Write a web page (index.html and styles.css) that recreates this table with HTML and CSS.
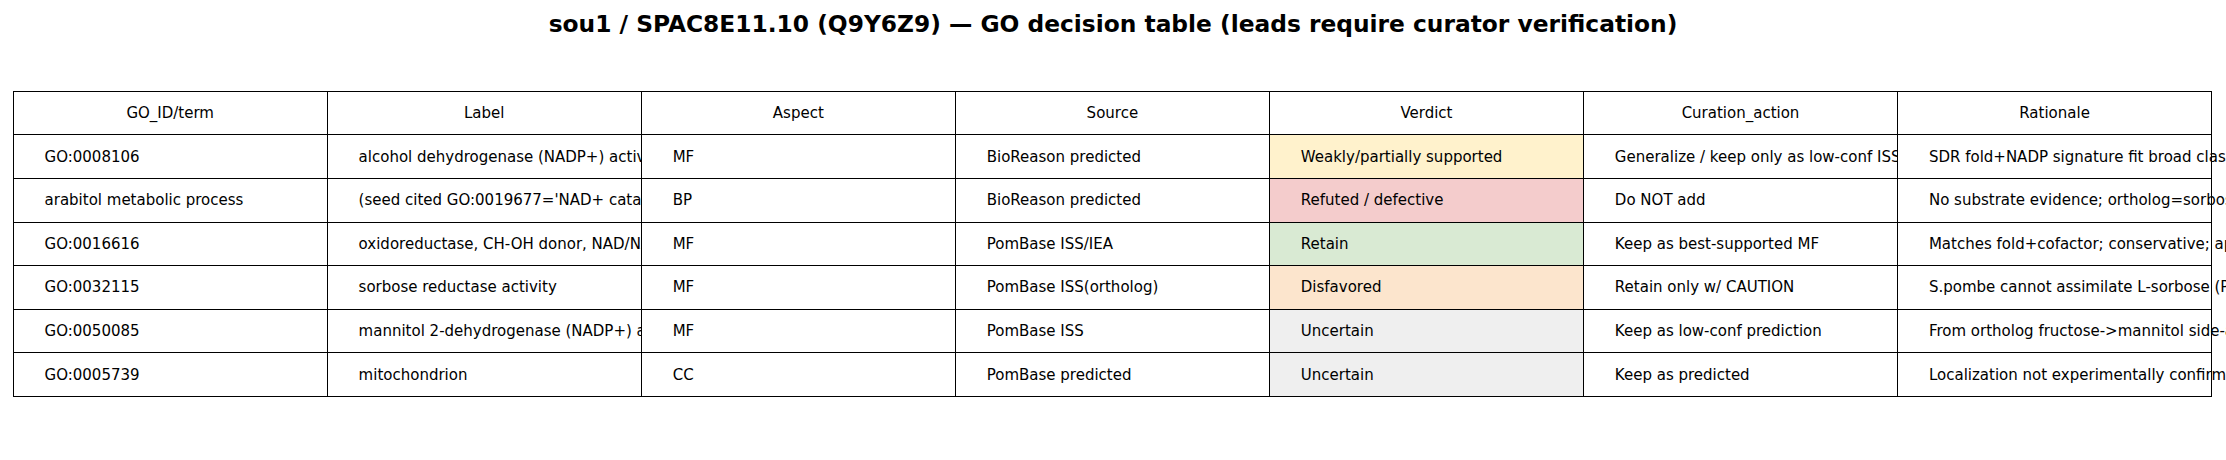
FILE: index.html
```html
<!DOCTYPE html>
<html lang="en">
<head>
<meta charset="utf-8">
<title>GO decision table</title>
<link rel="stylesheet" href="styles.css">
</head>
<body>
<div class="page">
  <h1 class="title">sou1 / SPAC8E11.10 (Q9Y6Z9) — GO decision table (leads require curator verification)</h1>
  <div class="table">
    <div class="cell head">GO_ID/term</div>
    <div class="cell head">Label</div>
    <div class="cell head">Aspect</div>
    <div class="cell head">Source</div>
    <div class="cell head">Verdict</div>
    <div class="cell head">Curation_action</div>
    <div class="cell head last">Rationale</div>

    <div class="cell">GO:0008106</div>
    <div class="cell">alcohol dehydrogenase (NADP+) activity</div>
    <div class="cell">MF</div>
    <div class="cell">BioReason predicted</div>
    <div class="cell v-weak">Weakly/partially supported</div>
    <div class="cell">Generalize / keep only as low-conf ISS</div>
    <div class="cell last">SDR fold+NADP signature fit broad class; substrate unverified</div>

    <div class="cell">arabitol metabolic process</div>
    <div class="cell">(seed cited GO:0019677='NAD+ catabolic process')</div>
    <div class="cell">BP</div>
    <div class="cell">BioReason predicted</div>
    <div class="cell v-refuted">Refuted / defective</div>
    <div class="cell">Do NOT add</div>
    <div class="cell last">No substrate evidence; ortholog=sorbose reductase</div>

    <div class="cell">GO:0016616</div>
    <div class="cell">oxidoreductase, CH-OH donor, NAD/NADP acceptor</div>
    <div class="cell">MF</div>
    <div class="cell">PomBase ISS/IEA</div>
    <div class="cell v-retain">Retain</div>
    <div class="cell">Keep as best-supported MF</div>
    <div class="cell last">Matches fold+cofactor; conservative; appropriate level</div>

    <div class="cell">GO:0032115</div>
    <div class="cell">sorbose reductase activity</div>
    <div class="cell">MF</div>
    <div class="cell">PomBase ISS(ortholog)</div>
    <div class="cell v-disfavored">Disfavored</div>
    <div class="cell">Retain only w/ CAUTION</div>
    <div class="cell last">S.pombe cannot assimilate L-sorbose (PomBase)</div>

    <div class="cell">GO:0050085</div>
    <div class="cell">mannitol 2-dehydrogenase (NADP+) activity</div>
    <div class="cell">MF</div>
    <div class="cell">PomBase ISS</div>
    <div class="cell v-uncertain">Uncertain</div>
    <div class="cell">Keep as low-conf prediction</div>
    <div class="cell last">From ortholog fructose-&gt;mannitol side-activity</div>

    <div class="cell">GO:0005739</div>
    <div class="cell">mitochondrion</div>
    <div class="cell">CC</div>
    <div class="cell">PomBase predicted</div>
    <div class="cell v-uncertain">Uncertain</div>
    <div class="cell">Keep as predicted</div>
    <div class="cell last">Localization not experimentally confirmed</div>
  </div>
</div>
</body>
</html>
```

FILE: styles.css
```css
html, body {
  margin: 0;
  padding: 0;
  background: #ffffff;
  overflow: hidden;
}

body {
  width: 2226px;
  height: 460px;
  font-family: "DejaVu Sans", "Liberation Sans", sans-serif;
  color: #000000;
}

.page {
  padding-top: 10.7px;
}

.title {
  margin: 0;
  font-size: 23.33px;
  line-height: 27px;
  font-weight: bold;
  text-align: center;
  white-space: nowrap;
}

.table {
  margin-top: 53.2px;
  margin-left: 12.67px;
  width: 2198.5px;
  display: grid;
  grid-template-columns: repeat(7, 314.07px);
  grid-auto-rows: 43.57px;
  border-top: 1.67px solid #000000;
  border-left: 1.67px solid #000000;
}

.cell {
  box-sizing: border-box;
  border-right: 1.67px solid #000000;
  border-bottom: 1.67px solid #000000;
  background: #ffffff;
  display: flex;
  align-items: center;
  padding-left: 30.9px;
  font-size: 15px;
  white-space: nowrap;
  overflow: hidden;
}

.head {
  justify-content: center;
  padding-left: 0;
}

.last {
  overflow: visible;
}

.v-weak { background: #fff2cc; }
.v-refuted { background: #f4cccc; }
.v-retain { background: #d9ead3; }
.v-disfavored { background: #fce5cd; }
.v-uncertain { background: #efefef; }
```
